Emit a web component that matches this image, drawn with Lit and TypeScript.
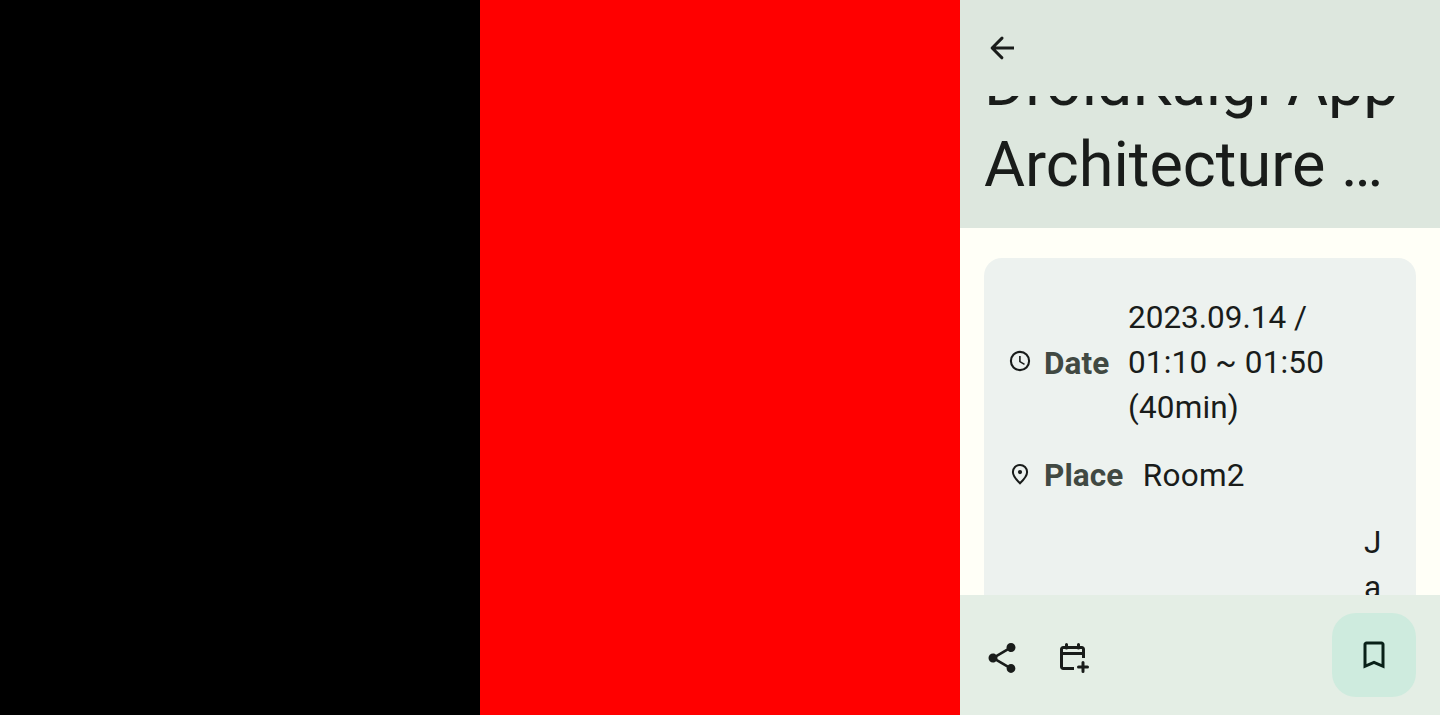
import { LitElement, html, css, svg } from "lit";
import { customElement } from "lit/decorators.js";

const icon = (name: string, viewBox: string, body: unknown) =>
  html`<svg class="icon ${name}" viewBox=${viewBox} fill="currentColor" aria-hidden="true">${body}</svg>`;

const back = icon("large", "0 0 24 24", svg`<path d="M20 11H7.83l4.88-4.88c.39-.39.39-1.03 0-1.42a1 1 0 0 0-1.41 0L4.7 11.3a1 1 0 0 0 0 1.41l6.59 6.59a1 1 0 0 0 1.41-1.41L7.83 13H20z"/>`);
const clock = icon("small", "0 0 24 24", svg`<circle cx="12" cy="12" r="9.1" fill="none" stroke="currentColor" stroke-width="2.1"/><path d="M11.1 7h1.6v5.2l4.2 2.5-.8 1.4-5-3z"/>`);
const pin = icon("small", "0 0 24 24", svg`<path d="M12 3a7.1 7.1 0 0 0-7.1 7.1c0 4.2 3.7 8 7.1 11.2 3.4-3.2 7.1-7 7.1-11.2A7.1 7.1 0 0 0 12 3z" fill="none" stroke="currentColor" stroke-width="2"/><circle cx="12" cy="10.1" r="2.1"/>`);
const share = icon("large", "0 0 24 24", svg`<path d="M18 16.08c-.76 0-1.44.3-1.96.77L8.91 12.7c.05-.23.09-.46.09-.7s-.04-.47-.09-.7l7.05-4.11c.54.5 1.25.81 2.04.81 1.66 0 3-1.34 3-3s-1.34-3-3-3-3 1.34-3 3c0 .24.04.47.09.7L8.04 9.81C7.5 9.31 6.79 9 6 9c-1.66 0-3 1.34-3 3s1.34 3 3 3c.79 0 1.5-.31 2.04-.81l7.12 4.16c-.05.21-.08.43-.08.65 0 1.61 1.31 2.92 2.92 2.92s2.92-1.31 2.92-2.92-1.31-2.92-2.92-2.92z"/>`);
const calendar = icon("large", "0 0 36 36", svg`<g fill="none" stroke="currentColor" stroke-width="3" stroke-linejoin="round"><path d="M18 28.5H7.2a1.7 1.7 0 0 1-1.7-1.7V9.2a1.7 1.7 0 0 1 1.7-1.7h18.6a1.7 1.7 0 0 1 1.7 1.7V18M5.5 13.5h22"/><path d="M10.5 8V4.600M22.5 8V4.600M27 22.5v9M22.5 27h9" stroke-linecap="round"/></g>`);
const bookmark = icon("large", "0 0 24 24", svg`<path d="M17 3H7c-1.1 0-2 .9-2 2v16l7-3 7 3V5c0-1.1-.9-2-2-2zm0 15-5-2.18L7 18V5h10z"/>`);

@customElement("app-root")
export class AppRoot extends LitElement {
  static styles = css`
    :host {
      display: grid;
      grid-template-columns: repeat(3, 480px);
      height: 715px;
      font-family: Roboto, "Noto Sans", sans-serif;
      color: #191c1a;
    }
    .black { background: #000; }
    .red { background: #f00; }
    .phone {
      display: flex;
      flex-direction: column;
      height: 715px;
      overflow: hidden;
      background: #fffff7;
    }
    .icon { display: block; flex: none; }
    .large { width: 36px; height: 36px; }
    .small { width: 24px; height: 24px; }
    .top { flex: none; background: #dde7de; }
    .toolbar { height: 96px; padding: 0 24px; display: flex; align-items: center; }
    .title-window {
      height: 132px;
      box-sizing: border-box;
      padding: 0 24px 23px;
      display: flex;
      flex-direction: column;
      justify-content: flex-end;
      overflow: hidden;
    }
    h1 {
      flex: none;
      margin: 0;
      font-size: 63px;
      line-height: 81px;
      font-weight: 400;
      white-space: nowrap;
    }
    .line { display: block; }
    .line:first-child { letter-spacing: -0.12px; }
    .content { flex: 1; min-height: 0; overflow: hidden; padding: 30px 24px 0; }
    .card {
      box-sizing: border-box;
      height: 700px;
      padding: 37px 24px 0;
      border-radius: 18px;
      background: #edf2ef;
      display: flex;
      flex-direction: column;
    }
    .row {
      display: flex;
      align-items: center;
      margin-bottom: 23px;
      font-size: 31.5px;
      line-height: 45px;
    }
    .row .icon { margin-top: -3px; }
    .label { margin-left: 12px; font-weight: 700; color: #414942; letter-spacing: 0.1px; }
    .row:first-child .label { padding-top: 2px; }
    .row:nth-child(2) { margin-bottom: 22px; }
    .value { margin-left: 18.6px; letter-spacing: 0.16px; }
    .date { letter-spacing: 0; }
    .place { margin-left: 19.4px; letter-spacing: 0.25px; }
    .languages { justify-content: flex-end; }
    .letters { width: 28px; }
    .bottom {
      flex: none;
      box-sizing: border-box;
      height: 120px;
      padding: 0 24px;
      display: flex;
      align-items: center;
      gap: 36px;
      background: #e4eee5;
    }
    .bottom > .icon { margin-top: 6px; }
    .fab {
      margin-left: auto;
      width: 84px;
      height: 84px;
      padding: 0;
      border: 0;
      border-radius: 24px;
      background: #ceebde;
      color: #092018;
      display: grid;
      place-items: center;
    }
  `;

  render() {
    return html`
      <div class="black"></div>
      <div class="red"></div>
      <main class="phone">
        <header class="top">
          <div class="toolbar">${back}</div>
          <div class="title-window">
            <h1><span class="line">DroidKaigi App</span><span class="line">Architecture …</span></h1>
          </div>
        </header>
        <section class="content">
          <div class="card">
            <div class="row">
              ${clock}<span class="label">Date</span>
              <span class="value"><span class="date">2023.09.14 /</span><br />01:10 ~ 01:50<br />(40min)</span>
            </div>
            <div class="row">
              ${pin}<span class="label">Place</span>
              <span class="value place">Room2</span>
            </div>
            <div class="row languages"><span class="letters">J<br />a</span></div>
          </div>
        </section>
        <footer class="bottom">
          ${share}${calendar}
          <button class="fab" aria-label="Bookmark">${bookmark}</button>
        </footer>
      </main>
    `;
  }
}
